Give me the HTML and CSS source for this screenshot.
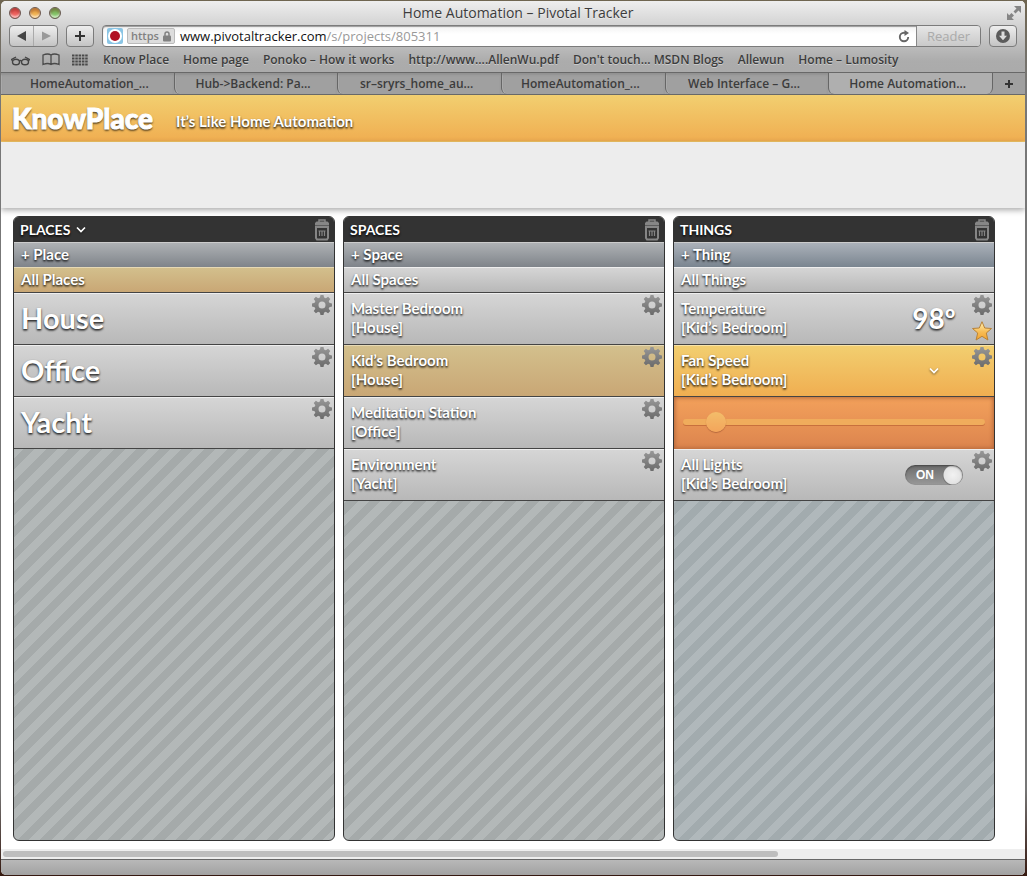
FILE: index.html
```html
<!DOCTYPE html>
<html lang="en">
<head>
<meta charset="utf-8">
<title>Home Automation – Pivotal Tracker</title>
<link rel="stylesheet" href="styles.css">
</head>
<body>
<svg class="sprite" aria-hidden="true">
  <defs>
    <linearGradient id="star-fill" x1="0" y1="0" x2="0" y2="1"><stop offset="0" stop-color="#fff3b8"/><stop offset=".55" stop-color="#f8bd55"/><stop offset="1" stop-color="#f3a32f"/></linearGradient>
    <linearGradient id="gear-fill" gradientUnits="userSpaceOnUse" x1="0" y1="-10" x2="0" y2="10"><stop offset="0" stop-color="#979797"/><stop offset="1" stop-color="#6b6b6b"/></linearGradient>
  </defs>
  <symbol id="gear" viewBox="-10 -10 20 20">
    <path fill="none" stroke="url(#gear-fill)" stroke-width="4.200" d="M0-5.600a5.600 5.600 0 1 0 0 11.200a5.600 5.600 0 1 0 0-11.200z"/>
    <path fill="url(#gear-fill)" d="M-2.200-7L-1.500-10h3l.7 3zM-2.200 7l.7 3h3l.7-3zM-7-2.200l-3 .7v3l3 .7zM7-2.200l3 .7v3l-3 .7zM3.400-6.500L6.100-8.300 8.300-6.100 6.500-3.400zM-3.400-6.500L-6.100-8.300-8.300-6.100-6.500-3.400zM3.400 6.500L6.100 8.300 8.300 6.100 6.500 3.400zM-3.400 6.500L-6.100 8.300-8.300 6.100-6.500 3.400z"/>
  </symbol>
  <symbol id="trash" viewBox="0 0 16 22">
    <path fill="none" stroke="#868686" stroke-width="1.500" d="M5 3V1h6v2"/>
    <path fill="#868686" d="M2.500 2.500h11L15 4v2.500H1V4z"/>
    <path fill="none" stroke="#868686" stroke-width="2" d="M2 8h12v11l-1 1.500H3L2 19z"/>
    <path fill="none" stroke="#868686" stroke-width="1.200" d="M5.500 12v5M8 12v5M10.500 12v5M4.500 12h7"/>
  </symbol>
  <symbol id="chevron" viewBox="0 0 10 7"><path d="M1 1.500l4 4 4-4" fill="none" stroke="#fff" stroke-width="1.700"/></symbol>
</svg>

<div class="window">
  <header class="chrome">
    <div class="titlebar">
      <div class="lights"><button class="light red" aria-label="Close"></button><button class="light amber" aria-label="Minimise"></button><button class="light green" aria-label="Zoom"></button></div>
      <div class="title">Home Automation – Pivotal Tracker</div>
      <button class="fullscreen" aria-label="Full screen"><svg width="14" height="14" viewBox="0 0 14 14"><path fill="#858585" d="M7 0h7v7l-2.500-2.500-3 3-2-2 3-3zM0 14V7l2.200 2.200L4.500 7l2.500 2.500-2.300 2.300L7 14z"/></svg></button>
    </div>
    <div class="toolbar">
      <div class="nav">
        <button aria-label="Back"><svg width="10" height="10" viewBox="0 0 10 10"><path d="M0 5l9-5v10z" fill="#444"/></svg></button>
        <button aria-label="Forward"><svg width="10" height="10" viewBox="0 0 10 10"><path d="M10 5L1 .5v9z" fill="#999"/></svg></button>
      </div>
      <button class="tool plus" aria-label="Add bookmark"><svg width="10" height="10" viewBox="0 0 10 10"><path d="M5 0v10M0 5h10" stroke="#333" stroke-width="2"/></svg></button>
      <div class="address">
        <svg class="favicon" width="16" height="16" viewBox="0 0 16 16"><rect width="16" height="16" rx="2" fill="#8ac5e5"/><circle cx="8" cy="8" r="7" fill="#fff"/><circle cx="8" cy="8" r="5" fill="#b01224"/></svg>
        <span class="secure">https <svg width="8" height="11" viewBox="0 0 8 11"><path d="M2 5V3a2 2 0 0 1 4 0v2" fill="none" stroke="#818181" stroke-width="1.500"/><rect y="4.500" width="8" height="6" rx="1" fill="#818181"/></svg></span>
        <span class="url">www.pivotaltracker.com<span class="path">/s/projects/805311</span></span>
        <button class="reload" aria-label="Reload"><svg width="12" height="13" viewBox="0 0 12 13"><path d="M8 2.800H6a4.200 4.200 0 1 0 4.200 4.200" fill="none" stroke="#666" stroke-width="1.900"/><path d="M6.500 0L11 3 6.500 6z" fill="#666"/></svg></button>
        <button class="reader">Reader</button>
      </div>
      <button class="tool" aria-label="Downloads"><svg width="14" height="14" viewBox="0 0 14 14"><circle cx="7" cy="7" r="7" fill="#5b5b5b"/><path d="M5.500 2.500h3v4.200H11l-4 4.500-4-4.500h2.500z" fill="#ddd"/></svg></button>
    </div>
    <nav class="bookmarks">
      <div class="marks">
        <svg width="19" height="12" viewBox="0 0 19 12"><g fill="none" stroke="#444" stroke-width="1.400"><ellipse cx="5" cy="8" rx="3.500" ry="2.800"/><ellipse cx="14" cy="8" rx="3.500" ry="2.800"/><path d="M8.300 7q1.200-1 2.400 0M1.500 7L.7 5.500 5 3M17.500 7l.8-1.500L14 3"/></g></svg>
        <svg width="18" height="13" viewBox="0 0 18 13"><path d="M9 11.500V2Q6 0 1 2v9.500q5-2 8 0 3-2 8 0V2Q12 0 9 2" fill="none" stroke="#4a4a4a" stroke-width="1.300"/></svg>
        <svg width="16" height="12" viewBox="0 0 16 12"><path d="M0 1.500h16M0 4.500h16M0 7.500h16M0 10.500h16" stroke="#4a4a4a" stroke-width="2" stroke-dasharray="2.500 .8"/></svg>
      </div>
      <a href="#">Know Place</a><a href="#">Home page</a><a href="#">Ponoko – How it works</a><a href="#">http://www....AllenWu.pdf</a><a href="#">Don't touch... MSDN Blogs</a><a href="#">Allewun</a><a href="#">Home – Lumosity</a>
    </nav>
    <div class="tabs">
      <button class="tab">HomeAutomation_...</button><button class="tab">Hub-&gt;Backend: Pa...</button><button class="tab">sr–sryrs_home_au...</button><button class="tab">HomeAutomation_...</button><button class="tab">Web Interface – G...</button><button class="tab active">Home Automation...</button>
      <button class="newtab" aria-label="New tab"><svg width="8" height="8" viewBox="0 0 8 8"><path d="M4 0v8M0 4h8" stroke="#333" stroke-width="2"/></svg></button>
    </div>
  </header>

  <div class="brand"><h1>KnowPlace</h1><p>It’s Like Home Automation</p></div>
  <div class="shelf"></div>

  <main class="board">
    <section class="column">
      <div class="head"><h2>PLACES</h2><svg class="chev" width="10" height="7"><use href="#chevron"/></svg><button class="trash" aria-label="Delete place"><svg width="16" height="22"><use href="#trash"/></svg></button></div>
      <button class="add">+ Place</button>
      <button class="all picked">All Places</button>
      <div class="row big"><span class="name">House</span><div class="acts"><button aria-label="House settings"><svg><use href="#gear"/></svg></button></div></div>
      <div class="row big"><span class="name">Office</span><div class="acts"><button aria-label="Office settings"><svg><use href="#gear"/></svg></button></div></div>
      <div class="row big"><span class="name">Yacht</span><div class="acts"><button aria-label="Yacht settings"><svg><use href="#gear"/></svg></button></div></div>
    </section>

    <section class="column">
      <div class="head"><h2>SPACES</h2><button class="trash" aria-label="Delete space"><svg width="16" height="22"><use href="#trash"/></svg></button></div>
      <button class="add">+ Space</button>
      <button class="all">All Spaces</button>
      <div class="row"><span class="name">Master Bedroom<br>[House]</span><div class="acts"><button aria-label="Master Bedroom settings"><svg><use href="#gear"/></svg></button></div></div>
      <div class="row picked"><span class="name">Kid’s Bedroom<br>[House]</span><div class="acts"><button aria-label="Kid’s Bedroom settings"><svg><use href="#gear"/></svg></button></div></div>
      <div class="row"><span class="name">Meditation Station<br>[Office]</span><div class="acts"><button aria-label="Meditation Station settings"><svg><use href="#gear"/></svg></button></div></div>
      <div class="row"><span class="name">Environment<br>[Yacht]</span><div class="acts"><button aria-label="Environment settings"><svg><use href="#gear"/></svg></button></div></div>
    </section>

    <section class="column cool">
      <div class="head"><h2>THINGS</h2><button class="trash" aria-label="Delete thing"><svg width="16" height="22"><use href="#trash"/></svg></button></div>
      <button class="add">+ Thing</button>
      <button class="all">All Things</button>
      <div class="row"><span class="name">Temperature<br>[Kid’s Bedroom]</span><span class="value">98º</span><div class="acts"><button aria-label="Temperature settings"><svg><use href="#gear"/></svg></button><button aria-label="Favourite"><svg viewBox="0 0 20 20"><path d="M10 .7l2.700 6.300 6.800.5-5.200 4.500 1.600 7-5.900-3.700L4.100 19l1.600-7L.5 7.500 7.300 7z" fill="url(#star-fill)" stroke="#b98236" stroke-width="1"/></svg></button></div></div>
      <div class="row open"><span class="name">Fan Speed<br>[Kid’s Bedroom]</span><span class="value"><svg class="chev" width="10" height="7"><use href="#chevron"/></svg></span><div class="acts"><button aria-label="Fan Speed settings"><svg><use href="#gear"/></svg></button></div></div>
      <div class="slider"><input type="range" min="0" max="100" value="8" aria-label="Fan speed"></div>
      <div class="row"><span class="name">All Lights<br>[Kid’s Bedroom]</span><label class="value toggle"><input type="checkbox" checked aria-label="All Lights"><span>ON</span></label><div class="acts"><button aria-label="All Lights settings"><svg><use href="#gear"/></svg></button></div></div>
    </section>
  </main>

  <div class="scroll"><div class="thumb"></div></div>
  <footer class="status"></footer>
</div>
</body>
</html>
```
FILE: styles.css
```css
* { box-sizing: border-box; }
body { margin: 0; background: linear-gradient(#6f6550, #777 10%, #777 90%, #35180f); }
button { margin: 0; padding: 0; border: 0; background: none; font: inherit; color: inherit; text-align: left; }
button svg { display: block; }
h1, h2, p { margin: 0; }
.sprite { position: absolute; width: 0; height: 0; }

.window {
  min-height: 100vh; display: flex; flex-direction: column;
  border: 1px solid transparent; border-right-width: 2px;
  background: #fff padding-box; border-radius: 6px; overflow: hidden;
}

/* Browser chrome */
.chrome {
  font: 12px/16px "Open Sans", "Noto Sans", sans-serif; color: #3c3c3c;
  background: linear-gradient(#eee, #d2d2d2 25px, #acacac 60px, #a8a8a8);
}
.title, .bookmarks, .tabs { text-shadow: 0 1px 0 rgba(255,255,255,.4); }
.titlebar { display: flex; align-items: center; justify-content: space-between; height: 23px; padding: 0 4px 0 8px; }
.lights { display: flex; gap: 8px; }
.light { width: 12px; height: 12px; border-radius: 50%; border: 1px solid #6b5a55; box-shadow: inset 0 3px 3px rgba(90,0,0,.35), inset 0 -2px 2px rgba(255,255,255,.6); }
.red { background: #f0605c; }
.amber { background: #f3b451; }
.green { background: #82c566; }
.title { flex: 1; padding-right: 32px; font-size: 14px; text-align: center; }
.toolbar { display: flex; align-items: center; padding: 1px 8px 0; }
.nav, .tool, .address { height: 22px; border: 1px solid #7b7b7b; border-radius: 4px; background: linear-gradient(#eee, #c4c4c4); }
.nav { display: flex; width: 49px; }
.nav button, .tool, .newtab { display: flex; align-items: center; justify-content: center; }
.nav button { flex: 1; }
.nav button + button { border-left: 1px solid #aaa; }
.tool { width: 28px; }
.plus { margin-left: 8px; }
.address { flex: 1; display: flex; align-items: center; margin: 0 8px; padding-left: 4px; overflow: hidden; background: linear-gradient(#f1f1f1, #fff 8px); box-shadow: inset 0 1px 1px #999; font-size: 13px; }
.secure { display: flex; align-items: center; gap: 4px; height: 16px; margin: 0 5px 0 4px; padding: 0 3px; border: 1px solid #bbb; border-radius: 2px; background: #ddd; color: #818181; font-size: 11px; font-weight: 600; }
.url { flex: 1; color: #111; }
.path { color: #999; }
.reload { margin-right: 6px; }
.reader { align-self: stretch; width: 64px; border-left: 1px solid #888; background: linear-gradient(#e6e6e6, #c9c9c9); color: #aaa; font-size: 13px; text-align: center; }
.bookmarks { display: flex; align-items: center; gap: 14px; height: 25px; padding-left: 10px; font-size: 12px; font-weight: 600; white-space: nowrap; }
.bookmarks a { color: inherit; text-decoration: none; }
.marks { display: flex; align-items: center; gap: 12px; padding-right: 1px; }
.tabs { display: flex; height: 23px; border-top: 1px solid #686868; border-bottom: 1px solid #686868; font-weight: 600; background: #a0a0a0; }
.tab { flex: 1 1 0; padding-right: 6px; text-align: center; border-left: 1px solid #666; border-bottom-left-radius: 6px; box-shadow: inset 0 2px 2px #929292, inset 1px 0 0 #b4b4b4; }
.tab:first-child { flex-grow: 1; padding-left: 10px; border-left: 0; border-radius: 0; }
.active { background: #afafaf; box-shadow: none; border-right: 1px solid #666; border-bottom-right-radius: 6px; }
.newtab { width: 32px; }

/* Page header */
.brand, .column { font-family: Lato, "Century Gothic", sans-serif; font-weight: 700; color: #fff; text-shadow: 0 1px 2px rgba(0,0,0,.7), 0 2px 2px rgba(0,0,0,.4); }
.brand { display: flex; align-items: center; gap: 23px; height: 47px; padding: 0 11px; line-height: 36px; background: linear-gradient(#f2cf70, #f0ae51); border-bottom: 1px solid #f3c565; }
.brand h1 { font-size: 28px; font-weight: 900; -webkit-text-stroke: 1px #fff; }
.brand p { padding-top: 5px; font-size: 15px; }
.shelf { height: 66px; background: #ededed; box-shadow: 0 2px 6px rgba(0,0,0,.35); }

/* Board */
.board { flex: 1; display: grid; grid-template-columns: repeat(3, minmax(0, 1fr)); gap: 8px; padding: 8px 30px 8px 12px; }
.column {
  --stripe-a: #b3b8b8; --stripe-b: #a5aaaa; --add-top: #b0b3b6; --add-end: #7f848a;
  display: flex; flex-direction: column; overflow: hidden;
  border: 1px solid #333; border-radius: 6px; font-size: 15px; line-height: 19px;
  background: repeating-linear-gradient(-45deg, var(--stripe-a) 0 8px, var(--stripe-b) 8px 16px);
}
.cool { --stripe-a: #b0b8bb; --stripe-b: #a2abae; --add-top: #adb3bb; --add-end: #7a8590; }
.head { display: flex; align-items: center; gap: 6px; height: 25px; padding: 0 4px 0 6px; background: #333; }
.head h2 { font-size: 14px; font-weight: 700; }
.chev { filter: drop-shadow(0 1px 1px rgba(0,0,0,.5)); }
.trash { margin-left: auto; }
.add, .all { width: 100%; padding-left: 7px; text-shadow: inherit; }
.add { height: 25px; background: linear-gradient(var(--add-top), var(--add-end)); box-shadow: inset 0 1px 0 #ccc; }
.all { height: 26px; }
.all, .row { background: linear-gradient(#d6d6d6, #b8b8b8); border-bottom: 1px solid #444; box-shadow: inset 0 1px 0 #eee; }
.picked { background: linear-gradient(#d3c08d, #c9a775); box-shadow: inset 0 1px 0 #e6d9b5; }
.open { background: linear-gradient(#f2cf70, #f0ae51); box-shadow: inset 0 1px 0 #f8e3a8; }
.row { display: flex; min-height: 52px; padding-left: 7px; }
.name { flex: 1; align-self: center; padding-bottom: 2px; }
.big .name { font-size: 29px; line-height: 36px; }
.acts { display: flex; flex-direction: column; gap: 6px; padding: 2px 2px 0 0; }
.acts svg { width: 20px; height: 20px; }
.value { display: flex; align-items: center; justify-content: center; width: 58px; margin-right: 9px; font-size: 28px; }
.slider { display: flex; align-items: center; height: 52px; padding: 0 9px 2px; background: linear-gradient(#f3a15b, #dc844e); box-shadow: inset 0 0 4px 1px #b5683c; }
.slider input { appearance: none; width: 100%; height: 20px; margin: 0; background: none; }
.slider input::-webkit-slider-runnable-track { height: 6px; border-radius: 3px; background: #f0ac5c; box-shadow: 0 1px 0 #c8703d; }
.slider input::-webkit-slider-thumb { appearance: none; width: 20px; height: 20px; margin-top: -7px; border-radius: 50%; background: linear-gradient(#f3bd6a, #f3a55b); box-shadow: 0 1px 1px #b5683c; }
.toggle input { appearance: none; position: absolute; margin: 0; }
.toggle span {
  width: 58px; height: 20px; padding-left: 11px; border-radius: 10px; font: bold 12px/20px "Liberation Sans", sans-serif; text-shadow: none;
  background: radial-gradient(circle at 48px 10px, #f2f2f2 0, #e2e2e2 9px, #777 10px, transparent 11px), linear-gradient(#6b6b6b, #999);
  box-shadow: inset 0 1px 2px #444;
}

/* Window bottom */
.scroll { padding: 2px; height: 10px; background: #eee; }
.thumb { width: 76%; height: 6px; border-radius: 3px; background: #bebebe; }
.status { height: 16px; border-top: 1px solid #686868; background: linear-gradient(#b8b8b8, #a2a2a2); }
```
